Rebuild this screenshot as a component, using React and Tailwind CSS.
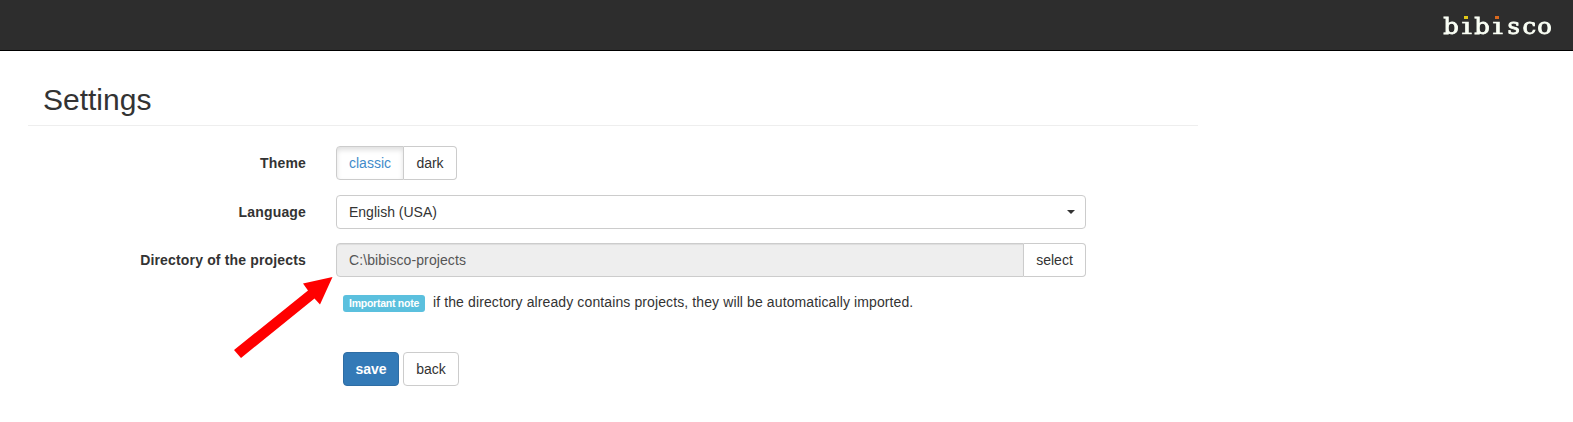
function Letter({ children }) {
  return (
    <span className="flex w-[15.5px] justify-center">
      <span className="inline-block scale-x-[1.1]">{children}</span>
    </span>
  );
}

function DottedI({ dot }) {
  return (
    <span className="relative flex w-[15.5px] justify-center">
      <span className="inline-block scale-x-[1.6] bg-[linear-gradient(transparent_9px,#fafff5_9px)] bg-clip-text text-transparent [-webkit-text-stroke:0.4px_transparent]">i</span>
      <span className={`absolute top-[4px] left-[5px] h-[3px] w-[4px] ${dot}`} />
    </span>
  );
}

function Row({ label, className, children }) {
  return (
    <div className={`flex h-[34px] items-center ${className}`}>
      <div className="w-[306px] text-right font-bold tracking-[0.16px] whitespace-nowrap text-[#333]">{label}</div>
      <div className="ml-[30px] flex h-[34px] w-[750px]">{children}</div>
    </div>
  );
}

export default function App() {
  return (
    <div className="h-[422px] overflow-hidden bg-white font-['Liberation_Sans',Arial,sans-serif] text-[14px] leading-5 text-[#333]">
      <header className="flex h-[51px] justify-end border-b border-black bg-[#2d2d2d] pr-[21px]">
        <div className="mt-[12px] flex h-[30px] font-['DejaVu_Serif',serif] text-[22px] leading-[30px] text-[#fafff5] [-webkit-text-stroke:0.8px_#fafff5]">
          <Letter>b</Letter>
          <DottedI dot="bg-[#e0c818]" />
          <Letter>b</Letter>
          <DottedI dot="bg-[#d9691e]" />
          <Letter>s</Letter>
          <Letter>c</Letter>
          <Letter>o</Letter>
        </div>
      </header>

      <div className="ml-7 flex h-[75px] w-[1170px] border-b border-[#eee] pt-[32px] pl-[15px]">
        <h1 className="text-[30px] leading-[33px]">Settings</h1>
      </div>

      <main className="relative">
        <Row label="Theme" className="mt-5">
          <button className="w-[68px] rounded-l border border-[#ccc] text-[#428bca] shadow-[inset_0_3px_5px_rgba(0,0,0,0.125)]">classic</button>
          <button className="w-[53px] rounded-r border border-l-0 border-[#ccc]">dark</button>
        </Row>
        <Row label="Language" className="mt-[15px]">
          <button className="flex w-full items-center justify-between rounded border border-[#ccc] px-3">
            <span>English (USA)</span>
            <span className="mr-[-2px] h-0 w-0 border-x-4 border-t-4 border-x-transparent border-t-[#333]" />
          </button>
        </Row>
        <Row label="Directory of the projects" className="mt-[14px]">
          <div className="flex w-[688px] items-center rounded-l border border-[#ccc] bg-[#eee] px-3 tracking-[0.1px] text-[#555] shadow-[inset_0_1px_1px_rgba(0,0,0,0.075)]">C:\bibisco-projects</div>
          <button className="w-[62px] rounded-r border border-l-0 border-[#ccc]">select</button>
        </Row>

        <div className="mt-[15px] ml-[343px] flex h-[20px] items-center whitespace-nowrap">
          <span className="mt-[3px] flex h-[17px] w-[82px] items-center justify-center rounded-[3px] bg-[#5bc0de] text-[10.5px] leading-none font-bold tracking-[-0.25px] text-white">Important note</span>
          <span className="ml-2 tracking-[0.11px]">if the directory already contains projects, they will be automatically imported.</span>
        </div>

        <div className="mt-10 ml-[343px] flex h-[34px] gap-1">
          <button className="w-[56px] rounded border border-[#2e6da4] bg-[#337ab7] font-bold text-white">save</button>
          <button className="w-[56px] rounded border border-[#ccc]">back</button>
        </div>

        <svg className="absolute top-[130px] left-[230px]" width="106" height="86" viewBox="230 276 106 86" fill="#f00">
          <path d="M332.5 277 303 283.5 308 290.5 234 350 241 358 314.5 298.5 320 304.5Z" />
        </svg>
      </main>
    </div>
  );
}
